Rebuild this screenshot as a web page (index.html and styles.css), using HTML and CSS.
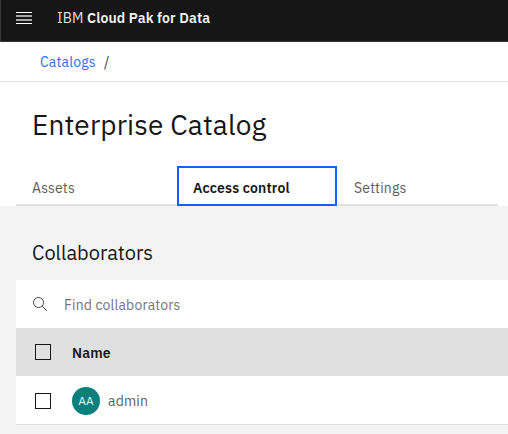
FILE: index.html
```html
<!DOCTYPE html>
<html lang="en">
<head>
<meta charset="utf-8">
<title>Enterprise Catalog</title>
<link rel="stylesheet" href="styles.css">
</head>
<body>
<header class="topbar">
  <svg class="menu" width="16" height="12" viewBox="0 0 16 12"><path fill="#fff" d="M0 0h16v1H0zM0 11h16v1H0z"/><path fill="#a5a5a5" d="M0 3h16v2H0zM0 7h16v2H0z"/></svg>
  <div class="brand"><span class="ibm">IBM</span><span class="product">Cloud Pak for Data</span></div>
</header>
<nav class="crumbs"><a class="crumb-link">Catalogs</a><span class="slash">/</span></nav>
<section class="heading">
  <h1 class="title">Enterprise Catalog</h1>
  <div class="tabs">
    <div class="tab"><span>Assets</span></div>
    <div class="tab active"><span>Access control</span></div>
    <div class="tab"><span>Settings</span></div>
  </div>
</section>
<main class="content">
  <h2 class="subtitle">Collaborators</h2>
  <div class="table">
    <div class="row search">
      <svg class="glass" width="16" height="16" viewBox="0 0 16 16" fill="none" stroke="#444" stroke-width="1"><circle cx="6.5" cy="6.5" r="5"/><path d="M10.1 10.1l4.6 4.6"/></svg>
      <span class="find">Find collaborators</span>
    </div>
    <div class="row head"><span class="check"></span><span class="name">Name</span></div>
    <div class="row user"><span class="check"></span><span class="avatar">AA</span><span class="admin">admin</span></div>
  </div>
</main>
</body>
</html>
```
FILE: styles.css
```css
* { box-sizing: border-box; }
body {
  margin: 0;
  height: 434px;
  overflow: hidden;
  background: #f3f3f3;
  color: #161616;
  font-family: "IBM Plex Sans", Roboto, sans-serif;
  font-size: 14px;
  line-height: 20px;
  letter-spacing: 0.16px;
}
span, a, h1, h2 { white-space: nowrap; }
.topbar {
  display: flex;
  height: 42px;
  padding-left: 15px;
  background: #161616;
  border-bottom: 1px solid #393939;
  border-left: 1px solid #393939;
  color: #f4f4f4;
}
.menu { margin-top: 12px; }
.brand { display: flex; margin: 8px 0 0 25px; letter-spacing: 0.14px; }
.ibm { width: 30px; color: #e0e0e0; }
.product { font-weight: 600; }
.crumbs {
  display: flex;
  height: 40px;
  padding: 10px 0 0 40px;
  background: #fff;
  border-bottom: 1px solid #e0e0e0;
}
.crumb-link { width: 64px; color: #2b70fe; }
.slash { color: #393939; }
.heading { height: 124px; padding: 25px 10px 0 16px; background: #fff; }
.title { margin: 0 0 0 16px; font-size: 28px; line-height: 36px; font-weight: 400; letter-spacing: 0.14px; }
.tabs { display: grid; grid-template-columns: 160px 160px 160px; gap: 1px; margin-top: 23px; }
.tab {
  height: 40px;
  padding: 12px 0 0 16px;
  border-bottom: 2px solid #e0e0e0;
  color: #5c5c5c;
}
.tab.active { border: 2px solid #0f62fe; padding: 10px 0 0 14px; color: #161616; font-weight: 600; }
.content { padding: 33px 0 0 16px; }
.subtitle { margin: 0 0 0 16px; font-size: 20px; line-height: 28px; font-weight: 400; letter-spacing: 0; }
.table { margin-top: 13px; }
.row { display: flex; align-items: center; height: 48px; background: #fff; }
.search { padding: 1px 0 0 16px; }
.glass { margin-top: -2px; }
.find { margin-left: 16px; color: #757575; }
.head { background: #e0e0e0; padding-left: 19px; }
.name { margin: 2px 0 0 21px; font-weight: 600; }
.check { width: 16px; height: 16px; border: 1px solid #161616; }
.user { height: 49px; padding-left: 19px; border-bottom: 1px solid #e0e0e0; color: #5c5c5c; }
.user .check { margin-top: 2px; }
.avatar {
  width: 28px;
  height: 28px;
  margin: 2px 8px 0 21px;
  border-radius: 50%;
  background: #08807c;
  color: #e8f4f4;
  font-size: 12px;
  line-height: 28px;
  text-align: center;
  letter-spacing: 0;
}
.admin { margin-top: 2px; }
```
